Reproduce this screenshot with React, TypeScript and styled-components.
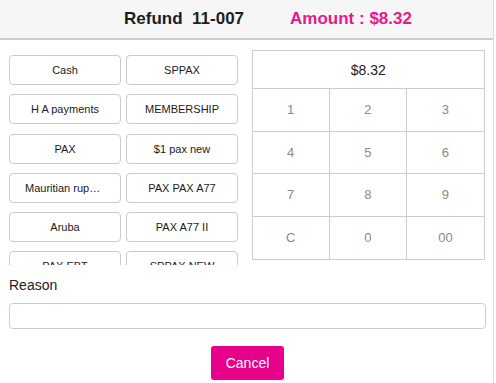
import React from 'react';
import styled, { createGlobalStyle } from 'styled-components';

const GlobalStyle = createGlobalStyle`
  html, body {
    margin: 0;
    padding: 0;
    background: #ffffff;
  }
  body {
    font-family: "Liberation Sans", Arial, sans-serif;
    color: #222;
  }
`;

const Screen = styled.div`
  width: 494px;
  height: 383px;
  border-right: 1px solid #dcdcdc;
  box-sizing: border-box;
  display: flex;
  flex-direction: column;
  overflow: hidden;
`;

const Header = styled.div`
  height: 38px;
  background: #f6f6f6;
  border-bottom: 2px solid #cdcdcd;
  display: flex;
  align-items: center;
  justify-content: center;
  gap: 46px;
  padding-left: 43px;
  font-size: 17px;
  font-weight: bold;
`;

const Title = styled.span`
  color: #1e1e1e;
  white-space: pre;
`;

const Amount = styled.span`
  color: #e8198b;
`;

const Body = styled.div`
  display: flex;
  gap: 14px;
  padding: 0 8px 0 9px;
  height: 225px;
`;

// payment methods, the list is scrolled so the last row is cut off
const MethodList = styled.div`
  width: 229px;
  height: 225px;
  overflow: hidden;
  padding-top: 15px;
  box-sizing: border-box;
  display: grid;
  grid-template-columns: 112px 112px;
  grid-auto-rows: 30px;
  column-gap: 5px;
  row-gap: 9.3px;
  align-content: start;
`;

const MethodButton = styled.button`
  border: 1px solid #cbcbcb;
  border-radius: 4px;
  background: #fff;
  font-family: inherit;
  font-size: 11px;
  color: #1a1a1a;
  padding: 0 15px;
  white-space: nowrap;
  overflow: hidden;
  text-overflow: ellipsis;
`;

const Keypad = styled.div`
  margin-top: 10px;
  width: 234px;
  height: 210px;
  border: 1px solid #cdcdcd;
  box-sizing: border-box;
  display: grid;
  grid-template-columns: repeat(3, 1fr);
  grid-template-rows: 38px repeat(4, 1fr);
`;

const Display = styled.div`
  grid-column: 1 / -1;
  display: flex;
  align-items: center;
  justify-content: center;
  font-size: 14px;
  color: #222;
  border-bottom: 1px solid #cdcdcd;
`;

const Key = styled.div<{ $last: boolean; $bottom: boolean }>`
  display: flex;
  align-items: center;
  justify-content: center;
  font-size: 13px;
  color: #8a8a8a;
  border-right: ${(p) => (p.$last ? 'none' : '1px solid #cdcdcd')};
  border-bottom: ${(p) => (p.$bottom ? 'none' : '1px solid #cdcdcd')};
`;

const Footer = styled.div`
  padding: 12px 8px 0 9px;
  display: flex;
  flex-direction: column;
`;

const Label = styled.div`
  font-size: 14px;
  color: #222;
  line-height: 16px;
`;

const ReasonInput = styled.input`
  margin-top: 10px;
  height: 26px;
  box-sizing: border-box;
  width: 477px;
  border: 1px solid #cbcbcb;
  border-radius: 4px;
  outline: none;
`;

const CancelButton = styled.button`
  align-self: center;
  margin-top: 17px;
  margin-left: 1px;
  width: 73px;
  height: 34px;
  border: none;
  border-radius: 3px;
  background: #e6008a;
  color: #fff;
  font-family: inherit;
  font-size: 14px;
`;

const methods = [
  'Cash', 'SPPAX',
  'H A payments', 'MEMBERSHIP',
  'PAX', '$1 pax new',
  'Mauritian rupees', 'PAX PAX A77',
  'Aruba', 'PAX A77 II',
  'PAX EBT', 'SPPAX NEW',
];

const keys = ['1', '2', '3', '4', '5', '6', '7', '8', '9', 'C', '0', '00'];

export default function App() {
  return (
    <Screen>
      <GlobalStyle />
      <Header>
        <Title>Refund  11-007</Title>
        <Amount>Amount : $8.32</Amount>
      </Header>
      <Body>
        <MethodList>
          {methods.map((m) => (
            <MethodButton key={m}>{m}</MethodButton>
          ))}
        </MethodList>
        <Keypad>
          <Display>$8.32</Display>
          {keys.map((k, i) => (
            <Key key={k} $last={i % 3 === 2} $bottom={i >= 9}>
              {k}
            </Key>
          ))}
        </Keypad>
      </Body>
      <Footer>
        <Label>Reason</Label>
        <ReasonInput />
        <CancelButton>Cancel</CancelButton>
      </Footer>
    </Screen>
  );
}
